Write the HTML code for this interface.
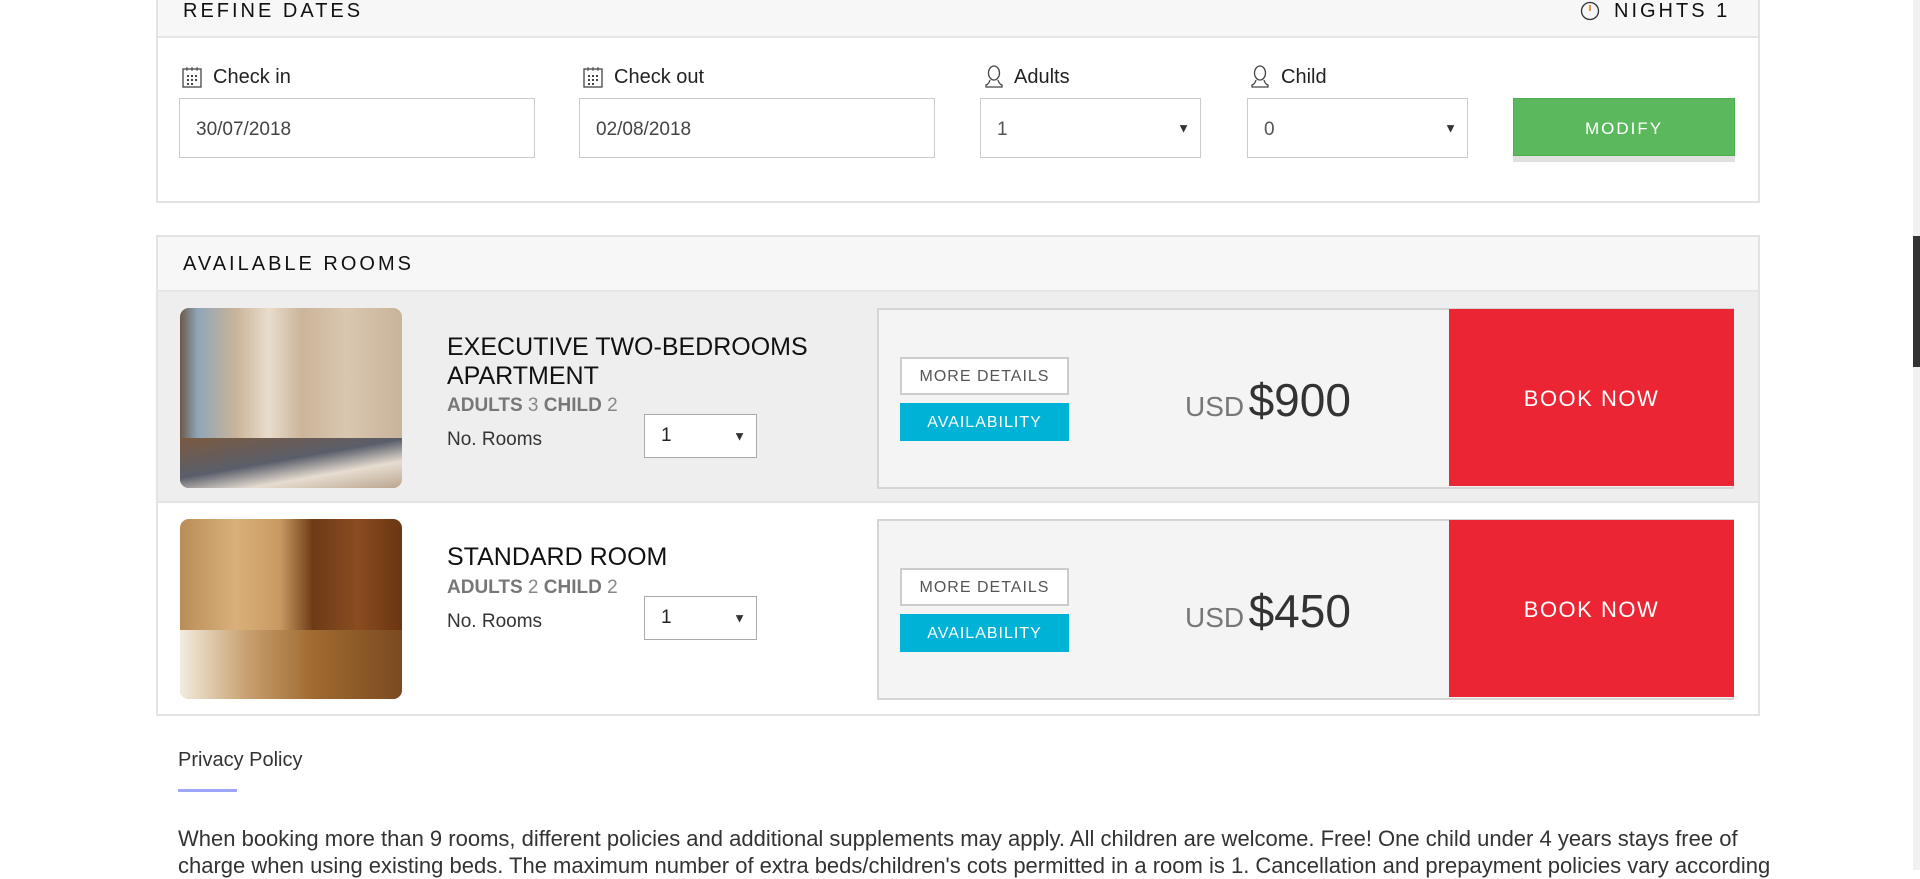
<!DOCTYPE html>
<html><head><meta charset="utf-8"><style>
*{box-sizing:border-box;margin:0;padding:0}
body{width:1920px;height:870px;overflow:hidden;background:#fff;font-family:"Liberation Sans",sans-serif;color:#222;position:relative}
.a{position:absolute}
.hdr{background:#f7f7f7;border-bottom:2px solid #e6e6e6}
.ht{font-size:20px;letter-spacing:3px;color:#111}
.lbl{font-size:20px;color:#222}
.inp{border:1px solid #ccc;background:#fff;font-size:19px;color:#444;padding-left:16px;display:flex;align-items:center}
.arr{position:absolute;right:10px;top:50%;transform:translateY(-50%);font-size:13px;color:#333}
.btnw{border:2px solid #ccc;background:#fff;font-size:16px;letter-spacing:1px;color:#555;display:flex;align-items:center;justify-content:center}
.btnb{background:#00b2d6;color:#fff;font-size:16px;letter-spacing:1px;display:flex;align-items:center;justify-content:center}
.book{background:#eb2533;color:#fff;font-size:22px;letter-spacing:1.5px;display:flex;align-items:center;justify-content:center}
.title{font-size:25px;line-height:29px;color:#111}
.sub{font-size:19px;color:#888}
.sub b{color:#777}
</style></head><body>
<div class="a" style="left:156px;top:-2px;width:1604px;height:205px;border:2px solid #e3e3e3;border-top:none"></div>
<div class="a hdr" style="left:158px;top:0;width:1600px;height:38px"></div>
<div class="a ht" style="left:183px;top:0px">REFINE DATES</div>
<svg class="a" style="left:1580px;top:1px" width="20" height="20" viewBox="0 0 20 20"><circle cx="10" cy="10" r="8.5" fill="none" stroke="#333" stroke-width="1.3"/><path d="M10 4v6" stroke="#e07000" stroke-width="1.5"/></svg>
<div class="a ht" style="left:1614px;top:0px">NIGHTS 1</div>

<svg class="a" style="left:182px;top:66px" width="20" height="22" viewBox="0 0 20 22"><rect x="1" y="3" width="18" height="18" fill="none" stroke="#444" stroke-width="1.3"/><path d="M5 1v4M10 1v4M15 1v4" stroke="#444"/><g fill="#444"><rect x="5" y="9" width="2" height="2"/><rect x="9" y="9" width="2" height="2"/><rect x="13" y="9" width="2" height="2"/><rect x="5" y="13" width="2" height="2"/><rect x="9" y="13" width="2" height="2"/><rect x="13" y="13" width="2" height="2"/><rect x="5" y="17" width="2" height="2"/><rect x="9" y="17" width="2" height="2"/></g></svg>
<div class="a lbl" style="left:213px;top:66px">Check in</div>
<svg class="a" style="left:583px;top:66px" width="20" height="22" viewBox="0 0 20 22"><rect x="1" y="3" width="18" height="18" fill="none" stroke="#444" stroke-width="1.3"/><path d="M5 1v4M10 1v4M15 1v4" stroke="#444"/><g fill="#444"><rect x="5" y="9" width="2" height="2"/><rect x="9" y="9" width="2" height="2"/><rect x="13" y="9" width="2" height="2"/><rect x="5" y="13" width="2" height="2"/><rect x="9" y="13" width="2" height="2"/><rect x="13" y="13" width="2" height="2"/><rect x="5" y="17" width="2" height="2"/><rect x="9" y="17" width="2" height="2"/></g></svg>
<div class="a lbl" style="left:614px;top:66px">Check out</div>
<svg class="a" style="left:984px;top:65px" width="20" height="24" viewBox="0 0 20 24"><ellipse cx="10" cy="8" rx="5.5" ry="7" fill="none" stroke="#444" stroke-width="1.3"/><path d="M6 15q-1 4-4 5v2h16v-2q-3-1-4-5" fill="none" stroke="#444" stroke-width="1.3"/></svg>
<div class="a lbl" style="left:1014px;top:66px">Adults</div>
<svg class="a" style="left:1250px;top:65px" width="20" height="24" viewBox="0 0 20 24"><ellipse cx="10" cy="8" rx="5.5" ry="7" fill="none" stroke="#444" stroke-width="1.3"/><path d="M6 15q-1 4-4 5v2h16v-2q-3-1-4-5" fill="none" stroke="#444" stroke-width="1.3"/></svg>
<div class="a lbl" style="left:1281px;top:66px">Child</div>

<div class="a inp" style="left:179px;top:98px;width:356px;height:60px;padding-top:3px">30/07/2018</div>
<div class="a inp" style="left:579px;top:98px;width:356px;height:60px;padding-top:3px">02/08/2018</div>
<div class="a inp" style="left:980px;top:98px;width:221px;height:60px;color:#555;padding-top:3px">1<span class="arr">▼</span></div>
<div class="a inp" style="left:1247px;top:98px;width:221px;height:60px;color:#555;padding-top:3px">0<span class="arr">▼</span></div>
<div class="a" style="left:1513px;top:104px;width:222px;height:58px;background:#e0e0e0"></div>
<div class="a" style="left:1513px;top:98px;width:222px;height:58px;background:#5cb85c;border:1px solid #4cae4c;color:#fff;font-size:17px;letter-spacing:2px;display:flex;align-items:center;justify-content:center;padding-top:3px">MODIFY</div>

<div class="a" style="left:156px;top:235px;width:1604px;height:481px;border:2px solid #e3e3e3"></div>
<div class="a hdr" style="left:158px;top:237px;width:1600px;height:55px"></div>
<div class="a ht" style="left:183px;top:253px">AVAILABLE ROOMS</div>

<div class="a" style="left:158px;top:292px;width:1600px;height:211px;background:#eee;border-bottom:2px solid #e3e3e3"></div>
<div class="a" style="left:180px;top:308px;width:222px;height:180px;border-radius:9px;background:linear-gradient(90deg,#6b5a4a 0%,#8fa6b8 8%,#c9b49a 25%,#e8dccb 40%,#cbb49a 55%,#d9c7b0 75%,#c9b39a 100%)"></div>
<div class="a" style="left:180px;top:438px;width:222px;height:50px;border-radius:0 0 9px 9px;background:linear-gradient(170deg,#7a5a40 0%,#5a5e6a 45%,#e6ddd0 70%,#bba58e 100%)"></div>
<div class="a title" style="left:447px;top:333px">EXECUTIVE TWO-BEDROOMS<br>APARTMENT</div>
<div class="a sub" style="left:447px;top:395px"><b>ADULTS</b> 3 <b>CHILD</b> 2</div>
<div class="a" style="left:447px;top:429px;font-size:19px;color:#333">No. Rooms</div>
<div class="a inp" style="left:644px;top:414px;width:113px;height:44px;color:#222;border-color:#aaa">1<span class="arr">▼</span></div>
<div class="a" style="left:877px;top:308px;width:857px;height:181px;background:#f4f4f4;border:2px solid #d5d5d5"></div>
<div class="a btnw" style="left:900px;top:357px;width:169px;height:38px;padding-top:2px">MORE DETAILS</div>
<div class="a btnb" style="left:900px;top:403px;width:169px;height:38px;padding-top:2px">AVAILABILITY</div>
<div class="a" style="left:1185px;top:373px;color:#333;white-space:nowrap"><span style="font-size:28px;color:#777">USD</span> <span style="font-size:46px">$900</span></div>
<div class="a book" style="left:1449px;top:309px;width:285px;height:177px;padding-top:2px">BOOK NOW</div>

<div class="a" style="left:180px;top:519px;width:222px;height:180px;border-radius:9px;background:linear-gradient(90deg,#b98d58 0%,#d9b07a 25%,#c89a62 45%,#6e3a16 60%,#8a4c20 80%,#6a3510 100%)"></div>
<div class="a" style="left:180px;top:630px;width:222px;height:69px;border-radius:0 0 9px 9px;background:linear-gradient(90deg,#f2ece0 0%,#c8a070 30%,#a06a30 60%,#7a4a20 100%)"></div>
<div class="a title" style="left:447px;top:543px">STANDARD ROOM</div>
<div class="a sub" style="left:447px;top:577px"><b>ADULTS</b> 2 <b>CHILD</b> 2</div>
<div class="a" style="left:447px;top:611px;font-size:19px;color:#333">No. Rooms</div>
<div class="a inp" style="left:644px;top:596px;width:113px;height:44px;color:#222;border-color:#aaa">1<span class="arr">▼</span></div>
<div class="a" style="left:877px;top:519px;width:857px;height:181px;background:#f4f4f4;border:2px solid #d5d5d5"></div>
<div class="a btnw" style="left:900px;top:568px;width:169px;height:38px;padding-top:2px">MORE DETAILS</div>
<div class="a btnb" style="left:900px;top:614px;width:169px;height:38px;padding-top:2px">AVAILABILITY</div>
<div class="a" style="left:1185px;top:584px;color:#333;white-space:nowrap"><span style="font-size:28px;color:#777">USD</span> <span style="font-size:46px">$450</span></div>
<div class="a book" style="left:1449px;top:520px;width:285px;height:177px;padding-top:2px">BOOK NOW</div>

<div class="a" style="left:178px;top:749px;font-size:20px;color:#333">Privacy Policy</div>
<div class="a" style="left:178px;top:789px;width:59px;height:3px;background:#9da6f8"></div>
<div class="a" style="left:178px;top:825px;font-size:22px;line-height:27px;color:#333;white-space:nowrap">When booking more than 9 rooms, different policies and additional supplements may apply. All children are welcome. Free! One child under 4 years stays free of<br>charge when using existing beds. The maximum number of extra beds/children's cots permitted in a room is 1. Cancellation and prepayment policies vary according</div>

<div class="a" style="left:1913px;top:0;width:7px;height:870px;background:#f1f1f4"></div>
<div class="a" style="left:1913px;top:236px;width:7px;height:131px;background:#333"></div>
</body></html>
